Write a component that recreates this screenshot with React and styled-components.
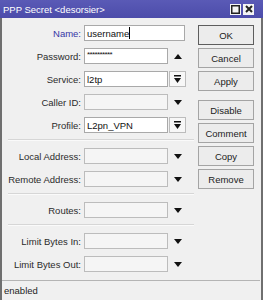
import styled, { createGlobalStyle } from "styled-components";

const GlobalStyle = createGlobalStyle`
  html, body {
    margin: 0;
    padding: 0;
    background: #f0f0f0;
  }
  body {
    font-family: "Liberation Sans", Arial, sans-serif;
    font-size: 9.5px;
    color: #2b2b2b;
  }
`;

const Window = styled.div`
  width: 263px;
  height: 300px;
  display: flex;
  flex-direction: column;
  background: #f0f0f0;
  box-sizing: border-box;
  overflow: hidden;
`;

const TitleBar = styled.div`
  height: 18px;
  flex: none;
  display: flex;
  align-items: center;
  padding: 0 9px 0 3px;
  background: linear-gradient(180deg, #5a5ab6 0%, #4c4caa 100%);
  color: #ffffff;
`;

const TitleText = styled.span`
  flex: 1;
  font-size: 9.5px;
  white-space: nowrap;
`;

const TitleButtons = styled.div`
  display: flex;
  gap: 2px;
`;

const TitleButton = styled.div`
  width: 11px;
  height: 11px;
  background: #f4f4f4;
  display: flex;
  align-items: center;
  justify-content: center;
`;

const Body = styled.div`
  flex: 1;
  display: flex;
  border-left: 2px solid #6f6f6f;
  border-right: 2px solid #6f6f6f;
  min-height: 0;
`;

const Main = styled.div`
  flex: 1;
  display: flex;
  flex-direction: column;
`;

const Content = styled.div`
  flex: 1;
  display: flex;
  gap: 4px;
`;

const Form = styled.div`
  width: 192px;
  padding-top: 7px;
  display: flex;
  flex-direction: column;
  gap: 7px;
`;

const Row = styled.div`
  display: flex;
  align-items: center;
  height: 16px;
`;

const Label = styled.label`
  width: 79px;
  margin-right: 3px;
  text-align: right;
  white-space: nowrap;
  color: ${(p) => (p.$active ? "#3636a6" : "#2b2b2b")};
`;

const Field = styled.div`
  box-sizing: border-box;
  width: ${(p) => (p.$wide ? "101px" : "84px")};
  height: 16px;
  border: 1px solid ${(p) => (p.$empty ? "#bcbcbc" : "#a9a9a9")};
  background: ${(p) => (p.$empty ? "#f5f5f5" : "#ffffff")};
  padding: 0 2px;
  display: flex;
  align-items: center;
  color: #111;
  white-space: nowrap;
  overflow: hidden;
`;

const Caret = styled.span`
  display: inline-block;
  width: 1px;
  height: 12px;
  background: #000;
`;

const Stars = styled.span`
  letter-spacing: -0.6px;
  font-size: 8px;
  margin-top: -4px;
`;

const IconSlot = styled.div`
  width: 17px;
  height: 16px;
  display: flex;
  align-items: center;
  justify-content: center;
  box-sizing: border-box;
  margin-left: 1px;
  ${(p) =>
    p.$boxed &&
    `
    border: 1px solid #bcbcbc;
    background: #f7f7f7;
  `}
`;

const Separator = styled.div`
  height: 1px;
  background: #d6d6d6;
  margin: -1px 0 0 6px;
  border-bottom: 1px solid #fafafa;
`;

const Buttons = styled.div`
  padding-top: 7px;
  display: flex;
  flex-direction: column;
  gap: 3px;
`;

const Button = styled.button`
  width: 56px;
  height: 20px;
  box-sizing: border-box;
  padding: 0;
  font-family: inherit;
  font-size: 9.5px;
  color: #222;
  background: #ececec;
  border: 1px solid ${(p) => (p.$default ? "#5e5e5e" : "#a4a4a4")};
  margin-top: ${(p) => (p.$spaced ? "6px" : "0")};
`;

const StatusBar = styled.div`
  height: 19px;
  flex: none;
  border-top: 1px solid #b4b4b4;
  margin-right: 1px;
  display: flex;
  align-items: center;
  padding-left: 2px;
  color: #1e1e1e;
`;

function DownArrow() {
  return (
    <svg width="8" height="5" viewBox="0 0 8 5">
      <polygon points="0,0 8,0 4,5" fill="#111" />
    </svg>
  );
}

function UpArrow() {
  return (
    <svg width="8" height="5" viewBox="0 0 8 5">
      <polygon points="0,5 8,5 4,0" fill="#111" />
    </svg>
  );
}

function ListArrow() {
  return (
    <svg width="7" height="8" viewBox="0 0 7 8">
      <rect x="0" y="0" width="7" height="1.5" fill="#111" />
      <polygon points="0,3 7,3 3.5,8" fill="#111" />
    </svg>
  );
}

function FieldRow({ label, value, active, wide, icon }) {
  const empty = value === undefined;
  return (
    <Row>
      <Label $active={active}>{label}</Label>
      <Field $wide={wide} $empty={empty}>
        {value}
      </Field>
      {icon === "down" && (
        <IconSlot>
          <DownArrow />
        </IconSlot>
      )}
      {icon === "up" && (
        <IconSlot>
          <UpArrow />
        </IconSlot>
      )}
      {icon === "list" && (
        <IconSlot $boxed>
          <ListArrow />
        </IconSlot>
      )}
    </Row>
  );
}

export default function App() {
  return (
    <Window>
      <GlobalStyle />
      <TitleBar>
        <TitleText>PPP Secret &lt;desorsier&gt;</TitleText>
        <TitleButtons>
          <TitleButton>
            <svg width="9" height="9" viewBox="0 0 9 9">
              <rect x="0.75" y="0.75" width="7.5" height="7.5" fill="none" stroke="#222" strokeWidth="1.5" />
            </svg>
          </TitleButton>
          <TitleButton>
            <svg width="8" height="8" viewBox="0 0 8 8">
              <path d="M1 1 L7 7 M7 1 L1 7" stroke="#222" strokeWidth="2" />
            </svg>
          </TitleButton>
        </TitleButtons>
      </TitleBar>
      <Body>
        <Main>
          <Content>
            <Form>
              <FieldRow
                label="Name:"
                active
                wide
                value={
                  <>
                    username
                    <Caret />
                  </>
                }
              />
              <FieldRow label="Password:" value={<Stars>**********</Stars>} icon="up" />
              <FieldRow label="Service:" value="l2tp" icon="list" />
              <FieldRow label="Caller ID:" icon="down" />
              <FieldRow label="Profile:" value="L2pn_VPN" icon="list" />
              <Separator />
              <FieldRow label="Local Address:" icon="down" />
              <FieldRow label="Remote Address:" icon="down" />
              <Separator />
              <FieldRow label="Routes:" icon="down" />
              <Separator />
              <FieldRow label="Limit Bytes In:" icon="down" />
              <FieldRow label="Limit Bytes Out:" icon="down" />
            </Form>
            <Buttons>
              <Button $default>OK</Button>
              <Button>Cancel</Button>
              <Button>Apply</Button>
              <Button $spaced>Disable</Button>
              <Button>Comment</Button>
              <Button>Copy</Button>
              <Button>Remove</Button>
            </Buttons>
          </Content>
          <StatusBar>enabled</StatusBar>
        </Main>
      </Body>
    </Window>
  );
}
